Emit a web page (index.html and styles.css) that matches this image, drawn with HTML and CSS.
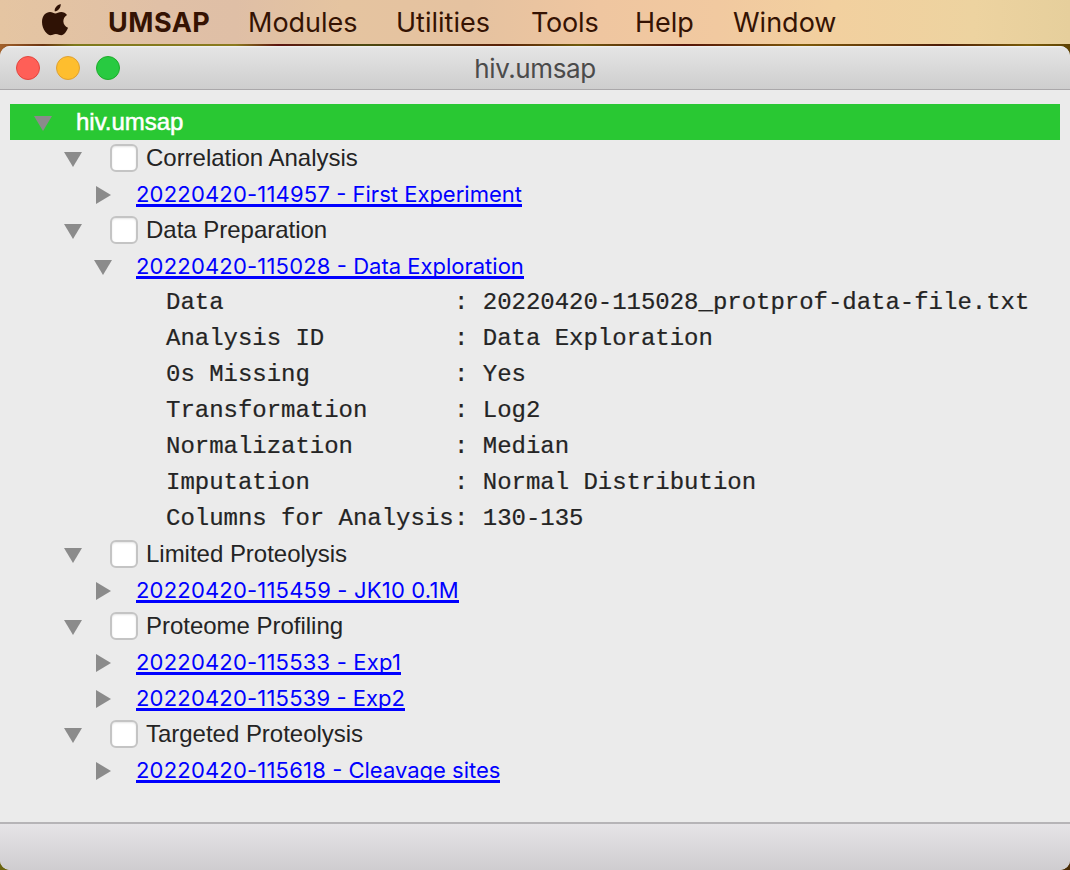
FILE: index.html
```html
<!DOCTYPE html>
<html lang="en">
<head>
<meta charset="utf-8">
<title>hiv.umsap</title>
<link rel="stylesheet" href="styles.css">
</head>
<body>
<nav class="menubar">
  <svg class="apple" viewBox="0 0 26 32"><path d="M18.7 0C19 3.800 16 7.300 12.700 7.300C12.300 4 15.200 .7 18.700 0ZM13.300 9.400C15 9.400 16.400 7.900 19.300 7.900C21.400 7.900 23.800 9 25 11C19.500 14.200 20.600 21.700 26 23.700C24.900 26.800 22 31.200 19.300 31.200C17.300 31.200 16.500 29.900 13.900 29.900C11.200 29.900 10.300 31.200 8.500 31.200C5.500 31.200 0 25.200 0 17.900C0 11.500 4 8 8 8C10.300 8 12.100 9.400 13.300 9.400Z"/></svg>
  <span class="menu-item menu-app">UMSAP</span>
  <span class="menu-item menu-modules">Modules</span>
  <span class="menu-item menu-utilities">Utilities</span>
  <span class="menu-item menu-tools">Tools</span>
  <span class="menu-item menu-help">Help</span>
  <span class="menu-item menu-window">Window</span>
</nav>
<main class="window">
  <header class="titlebar">
    <div class="lights"><i class="light close"></i><i class="light minimize"></i><i class="light zoom"></i></div>
    <h1 class="title">hiv.umsap</h1>
  </header>
  <div class="tree">
    <div class="row root"><svg class="arrow" viewBox="0 0 18 15"><path d="M0 0H18L9 15Z"/></svg><span class="label">hiv.umsap</span></div>
    <div class="row section"><svg class="arrow" viewBox="0 0 18 15"><path d="M0 0H18L9 15Z"/></svg><i class="check"></i><span class="label">Correlation Analysis</span></div>
    <div class="row entry"><svg class="arrow side" viewBox="0 0 15 18"><path d="M0 0V18L15 9Z"/></svg><a class="link"><span class="stamp">20220420-114957</span> - First Experiment</a></div>
    <div class="row section"><svg class="arrow" viewBox="0 0 18 15"><path d="M0 0H18L9 15Z"/></svg><i class="check"></i><span class="label">Data Preparation</span></div>
    <div class="row entry"><svg class="arrow" viewBox="0 0 18 15"><path d="M0 0H18L9 15Z"/></svg><a class="link"><span class="stamp">20220420-115028</span> - Data Exploration</a></div>
    <div class="row detail"><span class="key">Data</span><span>: 20220420-115028_protprof-data-file.txt</span></div>
    <div class="row detail"><span class="key">Analysis ID</span><span>: Data Exploration</span></div>
    <div class="row detail"><span class="key">0s Missing</span><span>: Yes</span></div>
    <div class="row detail"><span class="key">Transformation</span><span>: Log2</span></div>
    <div class="row detail"><span class="key">Normalization</span><span>: Median</span></div>
    <div class="row detail"><span class="key">Imputation</span><span>: Normal Distribution</span></div>
    <div class="row detail"><span class="key">Columns for Analysis</span><span>: 130-135</span></div>
    <div class="row section"><svg class="arrow" viewBox="0 0 18 15"><path d="M0 0H18L9 15Z"/></svg><i class="check"></i><span class="label">Limited Proteolysis</span></div>
    <div class="row entry"><svg class="arrow side" viewBox="0 0 15 18"><path d="M0 0V18L15 9Z"/></svg><a class="link"><span class="stamp">20220420-115459 - JK10 0.1M</span></a></div>
    <div class="row section"><svg class="arrow" viewBox="0 0 18 15"><path d="M0 0H18L9 15Z"/></svg><i class="check"></i><span class="label">Proteome Profiling</span></div>
    <div class="row entry"><svg class="arrow side" viewBox="0 0 15 18"><path d="M0 0V18L15 9Z"/></svg><a class="link"><span class="stamp">20220420-115533 - Exp1</span></a></div>
    <div class="row entry"><svg class="arrow side" viewBox="0 0 15 18"><path d="M0 0V18L15 9Z"/></svg><a class="link"><span class="stamp">20220420-115539</span> - Exp2</a></div>
    <div class="row section"><svg class="arrow" viewBox="0 0 18 15"><path d="M0 0H18L9 15Z"/></svg><i class="check"></i><span class="label">Targeted Proteolysis</span></div>
    <div class="row entry"><svg class="arrow side" viewBox="0 0 15 18"><path d="M0 0V18L15 9Z"/></svg><a class="link"><span class="stamp">20220420-115618</span> - Cleavage sites</a></div>
  </div>
  <footer class="statusbar"></footer>
</main>
</body>
</html>
```
FILE: styles.css
```css
* { box-sizing: border-box; }
body {
  margin: 0;
  width: 1070px;
  height: 870px;
  overflow: hidden;
  display: flex;
  flex-direction: column;
  background:
    linear-gradient(90deg, #a3622c 0, #6b3410 4%, #7d7a1c 7%, #8a7a1e 22%, #5c1410 26%, #4c4a10 34%, #5a2008 47%, #6f5a0c 54%, #541408 64%, #7d5a0a 75%, #4c1c08 88%, #7a5c08 96%, #5e4204 100%) top / 100% 60px no-repeat,
    linear-gradient(90deg, #6a6410, #4a2c04);
}
.menubar {
  height: 44px;
  flex: none;
  display: flex;
  align-items: center;
  padding-left: 42px;
  background: linear-gradient(90deg, #e5c5a2 0, #e0c0a6 15%, #dfbfa6 22%, #e5c4a0 32%, #e5c2a0 44%, #efc6a0 56%, #f1c9a0 67%, #f2d09f 78%, #edd3a0 91%, #e6cf9c 100%);
  font-family: Inter, sans-serif;
  font-size: 27px;
  color: #351303;
}
.apple { width: 26px; height: 32px; flex: none; margin: -5px 40px 0 0; fill: #2f1205; }
.menu-item { flex: none; white-space: nowrap; line-height: 44px; padding-top: 1px; }
.menu-app { width: 140px; font-weight: 700; letter-spacing: 0.5px; }
.menu-modules { width: 148px; }
.menu-utilities { width: 135px; }
.menu-tools { width: 104px; letter-spacing: -0.2px; }
.menu-help { width: 98px; }
.window {
  margin-top: 2px;
  flex: 1;
  display: flex;
  flex-direction: column;
  overflow: hidden;
  border-radius: 10px;
  background: #ebebeb;
}
.titlebar {
  height: 44px;
  flex: none;
  display: grid;
  grid-template-columns: 1fr auto 1fr;
  align-items: center;
  border-bottom: 1px solid #aaa8aa;
  background: linear-gradient(#f4f4f4 0, #e4e4e4 2px, #cecece 100%);
}
.lights { display: flex; gap: 16px; padding-left: 16px; }
.light { width: 24px; height: 24px; border-radius: 50%; border: 1px solid; }
.close { background: #ff5f57; border-color: #e2463f; }
.minimize { background: #febe2e; border-color: #dea032; }
.zoom { background: #28ca41; border-color: #1eac2b; }
.title {
  margin: 0;
  padding-top: 2px;
  font: 400 26px/41px Inter, sans-serif;
  letter-spacing: -0.4px;
  color: #4b4b4b;
}
.tree { flex: 1; padding: 14px 10px 0; }
.row { height: 36px; display: flex; align-items: center; white-space: nowrap; }
.root { background: #29c833; padding-left: 24px; }
.section { padding-left: 54px; }
.entry { padding-left: 84px; }
.detail {
  padding: 2px 0 0 156px;
  font: 24px/34px "Liberation Mono", monospace;
  color: #242424;
  letter-spacing: -0.02px;
  -webkit-text-stroke: 0.2px #242424;
}
.key { width: 288px; }
.arrow { width: 18px; height: 15px; flex: none; margin: 2px 0 0; fill: #8b8b8b; }
.side { width: 15px; height: 18px; margin: 2px 1px 0 2px; }
.label { font: 24px/36px "Liberation Sans", sans-serif; color: #242424; letter-spacing: -0.02px; }
.root .label { margin-left: 24px; color: #fff; -webkit-text-stroke: 0.5px #fff; }
.check {
  width: 28px;
  height: 28px;
  flex: none;
  margin: 0 8px 0 28px;
  border: 2px solid #c4c4c4;
  border-radius: 6px;
  background: #fff;
  box-shadow: inset 0 1px 2px #e4e4e4;
}
.link {
  margin-left: 24px;
  height: 26px;
  border-bottom: 3px solid #00f;
  font: 22px/26px Inter, sans-serif;
  color: #00f;
}
.stamp { letter-spacing: 0.19px; }
.statusbar {
  height: 48px;
  flex: none;
  border-top: 2px solid #b6b4b7;
  background: linear-gradient(#e6e4e7, #cfcdd0);
}
```
